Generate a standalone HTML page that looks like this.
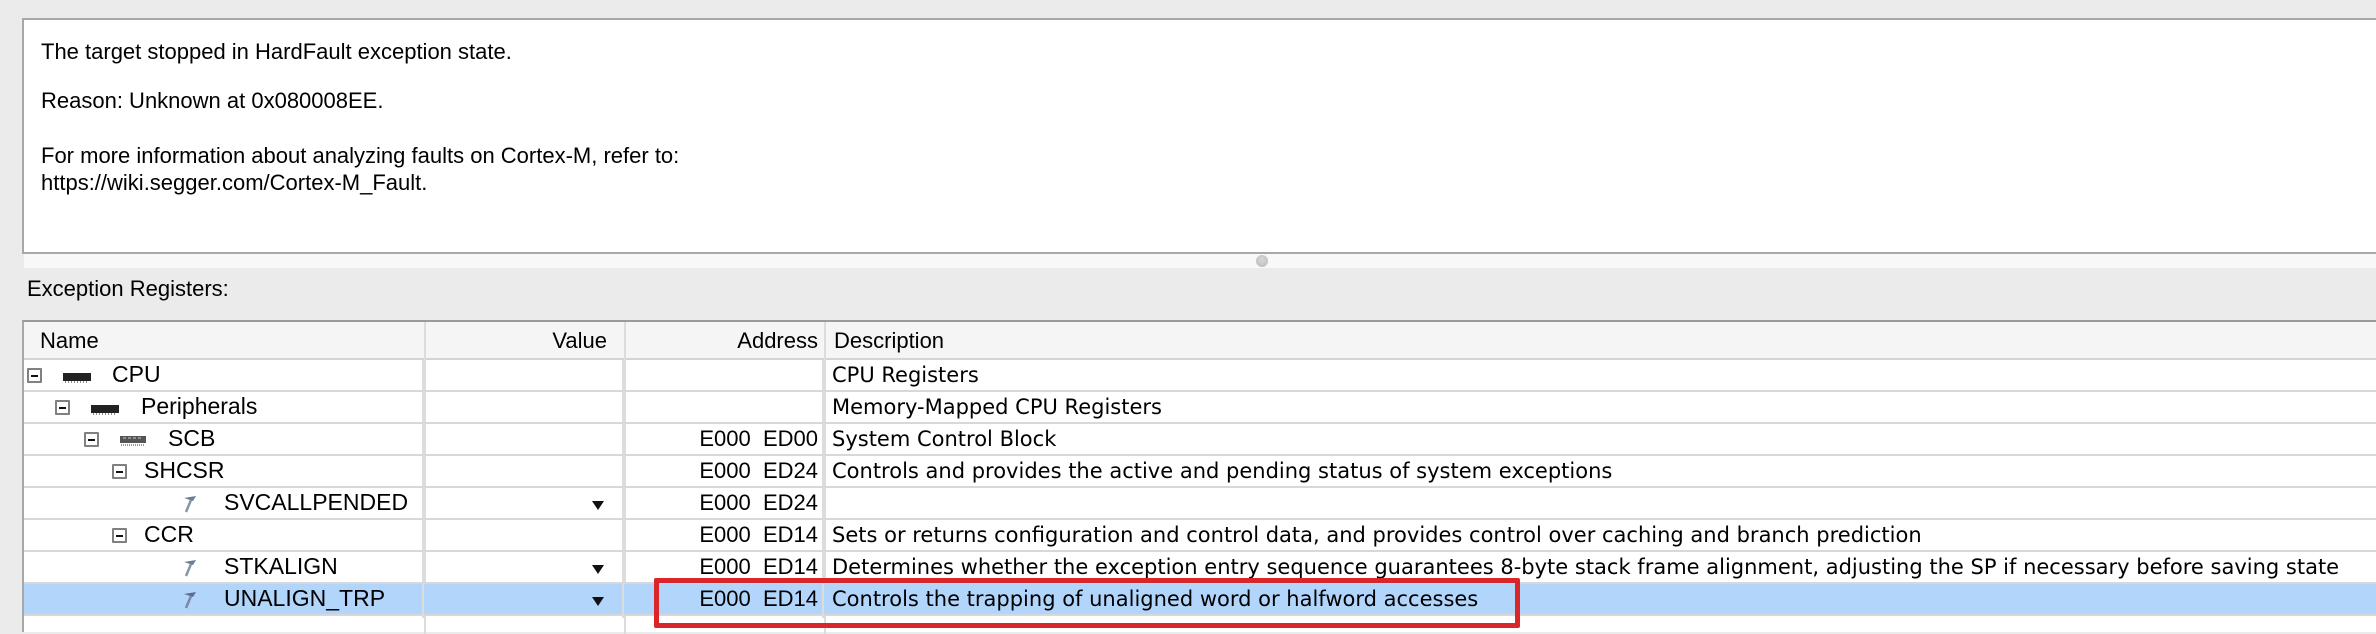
<!DOCTYPE html>
<html><head><meta charset="utf-8">
<style>
*{margin:0;padding:0;box-sizing:border-box}
body{width:2376px;height:632px;background:#ebebeb;position:relative;overflow:hidden;font-family:"Liberation Sans",sans-serif;color:#000}
.a{position:absolute;white-space:nowrap}
.n{font-family:"Liberation Sans",sans-serif;font-size:22px}
.nm{font-size:23px}
.r{text-align:right;width:200px}
.d{font-family:"DejaVu Sans","Liberation Sans",sans-serif;font-size:21px}
#panel{position:absolute;left:22px;top:18px;width:2360px;height:236px;background:#fff;border:2px solid #a8a8a8;border-right:none}
#panel p{position:absolute;left:17px;font-size:22px;white-space:nowrap}
#split{position:absolute;left:24px;top:254px;width:2352px;height:14px;background:#f8f8f8}
#dot{position:absolute;left:1256px;top:255px;width:12px;height:12px;border-radius:50%;background:radial-gradient(circle at 50% 40%,#d8d8d8,#b8b8b8)}
#tbl{position:absolute;left:22px;top:320px;width:2360px;height:312px;background:#fff;border-left:2px solid #a8a8a8;border-top:2px solid #9a9a9a}
.hdr{position:absolute;left:0;top:0;width:2360px;height:38px;background:#f5f5f5;border-bottom:2px solid #d4d4d4}
.row{position:absolute;left:0;width:2360px;height:32px;border-bottom:2px solid #d8d8d8}
.sel{background:#b2d5fb}
.vl{position:absolute;top:0;width:2px;background:#dcdcdc}
.tg{position:absolute;width:15px;height:15px;border:2px solid #808080;background:#fff;border-radius:1px}
.tg:after{content:"";position:absolute;left:2px;top:5px;width:7px;height:2px;background:#111}
.tri{position:absolute;width:0;height:0;border-left:6px solid transparent;border-right:6px solid transparent;border-top:9px solid #111}
</style></head><body>
<div id="panel">
<p style="top:19px">The target stopped in HardFault exception state.</p>
<p style="top:68px">Reason: Unknown at 0x080008EE.</p>
<p style="top:123px">For more information about analyzing faults on Cortex-M, refer to:</p>
<p style="top:150px">https://wiki.segger.com/Cortex-M_Fault.</p>
</div>
<div id="split"></div><div id="dot"></div>
<div class="a" style="left:27px;top:276px;font-size:22px">Exception Registers:</div>
<div id="tbl">
<div class="hdr">
<div class="a n" style="left:16px;top:6px">Name</div>
<div class="a n r" style="left:383px;top:6px">Value</div>
<div class="a n r" style="left:594px;top:6px">Address</div>
<div class="a n" style="left:810px;top:6px">Description</div>
</div>
<div class="vl" style="left:400px;height:312px"></div>
<div class="vl" style="left:600px;height:312px"></div>
<div class="vl" style="left:800px;height:312px"></div>
</div>
<div id="rows" style="position:absolute;left:24px;top:360px;width:2352px">
<div class="row" style="top:0"></div>
<div class="row" style="top:32px"></div>
<div class="row" style="top:64px"></div>
<div class="row" style="top:96px"></div>
<div class="row" style="top:128px"></div>
<div class="row" style="top:160px"></div>
<div class="row" style="top:192px"></div>
<div class="row sel" style="top:224px"></div>
<div class="vl" style="left:398px;top:0;height:258px"></div>
<div class="vl" style="left:598px;top:0;height:258px"></div>
<div class="vl" style="left:798px;top:0;height:258px"></div>
</div>

<div class="tg" style="left:27px;top:368px"></div>
<svg class="a" style="left:62px;top:370px" width="30" height="14"><rect x="1" y="3" width="28" height="8" fill="#222"/><path d="M3 12h24" stroke="#222" stroke-dasharray="1 2"/></svg>
<div class="a n nm" style="left:112px;top:361px">CPU</div>
<div class="a d" style="left:832px;top:363px">CPU Registers</div>

<div class="tg" style="left:55px;top:400px"></div>
<svg class="a" style="left:90px;top:402px" width="30" height="14"><rect x="1" y="3" width="28" height="8" fill="#222"/><path d="M3 12h24" stroke="#222" stroke-dasharray="1 2"/></svg>
<div class="a n nm" style="left:141px;top:393px">Peripherals</div>
<div class="a d" style="left:832px;top:395px">Memory-Mapped CPU Registers</div>

<div class="tg" style="left:84px;top:432px"></div>
<svg class="a" style="left:119px;top:434px" width="28" height="14"><rect x="1" y="2" width="26" height="7" fill="#555"/><path d="M4 4h20" stroke="#ccc" stroke-dasharray="3 2"/><path d="M2 11h24" stroke="#333" stroke-dasharray="1 1"/></svg>
<div class="a n nm" style="left:168px;top:425px">SCB</div>
<div class="a n r" style="left:618px;top:426px">E000&nbsp;&nbsp;ED00</div>
<div class="a d" style="left:832px;top:427px">System Control Block</div>

<div class="tg" style="left:112px;top:464px"></div>
<div class="a n nm" style="left:144px;top:457px">SHCSR</div>
<div class="a n r" style="left:618px;top:458px">E000&nbsp;&nbsp;ED24</div>
<div class="a d" style="left:832px;top:459px">Controls and provides the active and pending status of system exceptions</div>

<svg class="a" style="left:180px;top:494px" width="18" height="20"><path d="M4 4l12-2-3 5z" fill="#6b7d95"/><path d="M11 6l-5 12" stroke="#8795a8" stroke-width="2.5"/></svg>
<div class="a n nm" style="left:224px;top:489px">SVCALLPENDED</div>
<div class="tri" style="left:592px;top:501px"></div>
<div class="a n r" style="left:618px;top:490px">E000&nbsp;&nbsp;ED24</div>

<div class="tg" style="left:112px;top:528px"></div>
<div class="a n nm" style="left:144px;top:521px">CCR</div>
<div class="a n r" style="left:618px;top:522px">E000&nbsp;&nbsp;ED14</div>
<div class="a d" style="left:832px;top:523px">Sets or returns configuration and control data, and provides control over caching and branch prediction</div>

<svg class="a" style="left:180px;top:558px" width="18" height="20"><path d="M4 4l12-2-3 5z" fill="#6b7d95"/><path d="M11 6l-5 12" stroke="#8795a8" stroke-width="2.5"/></svg>
<div class="a n nm" style="left:224px;top:553px">STKALIGN</div>
<div class="tri" style="left:592px;top:565px"></div>
<div class="a n r" style="left:618px;top:554px">E000&nbsp;&nbsp;ED14</div>
<div class="a d" style="left:832px;top:555px">Determines whether the exception entry sequence guarantees 8-byte stack frame alignment, adjusting the SP if necessary before saving state</div>

<svg class="a" style="left:180px;top:590px" width="18" height="20"><path d="M4 4l12-2-3 5z" fill="#5a6f90"/><path d="M11 6l-5 12" stroke="#7a8aa5" stroke-width="2.5"/></svg>
<div class="a n nm" style="left:224px;top:585px">UNALIGN_TRP</div>
<div class="tri" style="left:592px;top:597px"></div>
<div class="a n r" style="left:618px;top:586px">E000&nbsp;&nbsp;ED14</div>
<div class="a d" style="left:832px;top:587px">Controls the trapping of unaligned word or halfword accesses</div>

<div style="position:absolute;left:654px;top:578px;width:866px;height:50px;border:5px solid #d9262a;border-radius:2px"></div>
</body></html>
